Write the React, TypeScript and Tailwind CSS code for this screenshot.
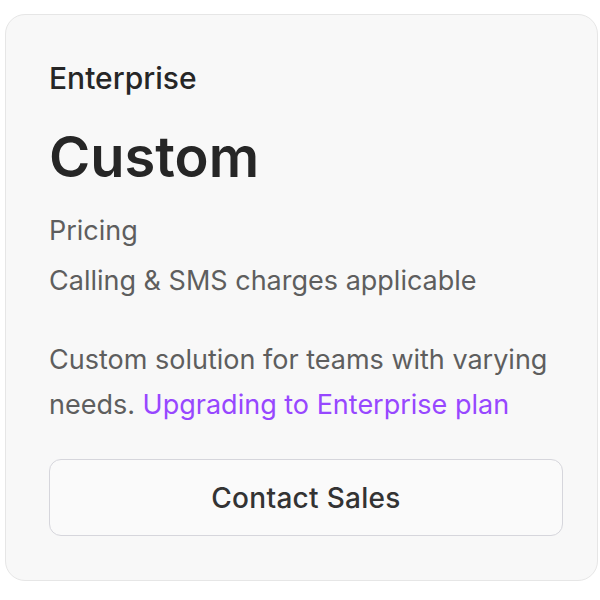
import React from 'react';

const EnterpriseCard: React.FC = () => {
  return (
    <div className="ml-[5px] mt-[14px] w-[593px] rounded-[20px] border border-[#e6e6e6] bg-[#f8f8f8] pl-[43px] pr-[34px] pt-[44px] pb-[44px] font-['Inter',sans-serif]">
      <div className="text-[30px] leading-[38px] font-medium text-[#262626]">Enterprise</div>
      <div className="mt-[28px] text-[56px] leading-[64px] font-semibold text-[#262626]">Custom</div>
      <div className="mt-[19px] text-[27px] leading-[45px] text-[#5e5e5e]">Pricing</div>
      <div className="mt-[5px] text-[27px] leading-[45px] text-[#5e5e5e]">Calling &amp; SMS charges applicable</div>
      <div className="mt-[34px] text-[27px] leading-[45px] text-[#5e5e5e]">
        <span>Custom solution for teams with varying needs. </span>
        <span className="text-[#9747ff]">Upgrading to Enterprise plan</span>
      </div>
      <button className="mt-[32px] h-[77px] w-[514px] rounded-[12px] border border-[#d6d6dc] bg-[#fafafa] text-[28px] font-medium tracking-[0.3px] text-[#333333]">
        Contact Sales
      </button>
    </div>
  );
};

export default function App() {
  return (
    <div className="h-[600px] w-[600px] overflow-hidden bg-white">
      <EnterpriseCard />
    </div>
  );
}
